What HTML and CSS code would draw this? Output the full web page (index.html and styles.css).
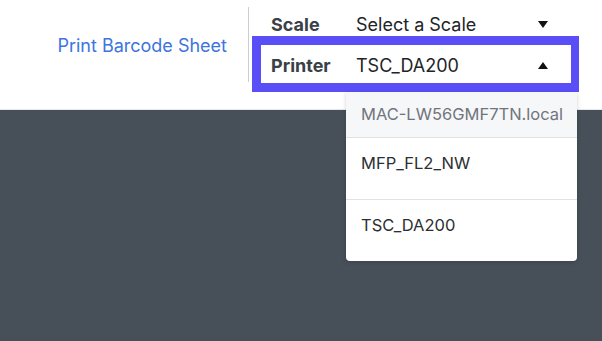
FILE: index.html
```html
<!DOCTYPE html>
<html>
<head>
<meta charset="utf-8">
<link rel="stylesheet" href="styles.css">
</head>
<body>
<header class="header">
  <div class="link-area"><a class="link" href="#">Print Barcode Sheet</a></div>
  <div class="divider"></div>
  <div class="form">
    <div class="row scale-row">
      <span class="label">Scale</span>
      <span class="value">Select a Scale</span>
      <span class="arrow arrow-down"></span>
    </div>
    <div class="row printer-row">
      <span class="label">Printer</span>
      <span class="value">TSC_DA200</span>
      <span class="arrow arrow-up"></span>
    </div>
  </div>
</header>
<ul class="menu">
  <li class="opt opt-first">MAC-LW56GMF7TN.local</li>
  <li class="opt">MFP_FL2_NW</li>
  <li class="opt opt-last">TSC_DA200</li>
</ul>
</body>
</html>
```
FILE: styles.css
```css
* { box-sizing: border-box; }
html, body { margin: 0; padding: 0; }
body {
  background: #474f59;
  font-family: Inter, Roboto, "Liberation Sans", sans-serif;
  width: 602px;
  height: 341px;
  overflow: hidden;
  position: relative;
}
.header {
  height: 110px;
  background: #fff;
  border-bottom: 1px solid #e4e7eb;
  display: flex;
  align-items: flex-start;
}
.link-area {
  width: 248px;
  height: 90px;
  display: flex;
  align-items: center;
  justify-content: flex-end;
  padding-right: 21px;
}
.link {
  color: #3d74de;
  text-decoration: none;
  font-size: 18px;
}
.divider {
  width: 1px;
  height: 75px;
  margin-top: 7px;
  background: #c9ced6;
}
.form {
  margin-left: 3px;
  width: 327px;
}
.row {
  display: flex;
  align-items: center;
  font-size: 18px;
}
.scale-row {
  height: 36px;
  padding-left: 19px;
  padding-top: 13px;
  padding-bottom: 0;
}
.printer-row {
  height: 56px;
  border: 9px solid #5a4ff7;
  border-right-width: 8px;
  padding-left: 10px;
  padding-top: 2px;
}
.label {
  width: 85px;
  font-weight: 700;
  color: #3a4047;
}
.value {
  flex: 1;
  color: #222426;
}
.arrow {
  width: 0;
  height: 0;
  border-left: 5.5px solid transparent;
  border-right: 5.5px solid transparent;
  margin-right: 31px;
}
.arrow-down { border-top: 7px solid #111; }
.arrow-up { border-bottom: 7px solid #111; margin-right: 23px; }
.menu {
  position: absolute;
  left: 346px;
  top: 92px;
  width: 231px;
  margin: 0;
  padding: 0;
  list-style: none;
  background: #fff;
  border-radius: 0 0 4px 4px;
  box-shadow: 0 1px 4px rgba(0,0,0,0.18);
  font-size: 16.5px;
}
.opt {
  height: 62px;
  padding: 15px 0 0 15px;
  color: #2c2f33;
  border-bottom: 1px solid #dfe3e8;
}
.opt-first {
  height: 46px;
  padding-top: 12px;
  background: #f6f7f9;
  color: #70757d;
}
.opt-last { border-bottom: none; height: 61px; }
```
